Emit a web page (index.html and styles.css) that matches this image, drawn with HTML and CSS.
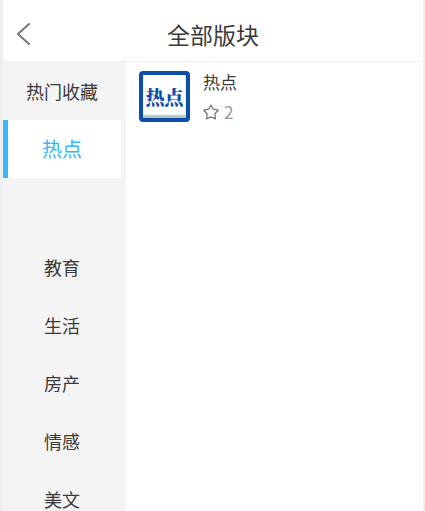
FILE: index.html
```html
<!doctype html>
<html lang="zh-CN">
<head>
  <meta charset="UTF-8" />
  <title>全部版块</title>
  <meta name="viewport" content="width=device-width, initial-scale=1.0" />
  <link rel="stylesheet" href="styles.css">
</head>
<body>
  <div class="app">
    <header class="header">
      <button class="back" type="button" aria-label="返回">
        <svg width="14" height="22" viewBox="0 0 14 22" fill="none" stroke="#777" stroke-width="2" stroke-linecap="round">
          <path d="M13 1 L2 11 L13 21" />
        </svg>
      </button>
      <h1>全部版块</h1>
    </header>
    <div class="content">
      <!-- Category list -->
      <nav class="sidebar">
        <a href="#fav">热门收藏</a>
        <a href="#hot" class="active">热点</a>
        <div class="spacer"></div>
        <a href="#edu">教育</a>
        <a href="#life">生活</a>
        <a href="#house">房产</a>
        <a href="#emotion">情感</a>
        <a href="#essay">美文</a>
      </nav>
      <!-- Boards in the selected category -->
      <main class="boards">
        <a href="#board" class="board">
          <span class="board-logo">热点</span>
          <span class="board-info">
            <span class="board-name">热点</span>
            <span class="board-count">
              <svg width="16" height="16" viewBox="0 0 16 16" fill="none" stroke="#777" stroke-width="1.3" stroke-linejoin="round">
                <path d="M8 1 L10.3 5.2 L15.2 6.2 L11.9 9.8 L12.4 14.8 L8 12.8 L3.6 14.8 L4.1 9.8 L0.8 6.2 L5.7 5.2 Z" />
              </svg>
              2
            </span>
          </span>
        </a>
      </main>
    </div>
  </div>
</body>
</html>
```

FILE: styles.css
```css
* {
  box-sizing: border-box;
}
body, html {
  margin: 0;
  padding: 0;
  height: 100%;
  overflow: hidden;
  font-family: 'Noto Sans CJK SC', sans-serif;
  color: #3a3a3a;
}
a {
  color: inherit;
  text-decoration: none;
}
.app {
  display: flex;
  flex-direction: column;
  height: 100%;
  background: #fff;
  border-left: 3px solid #eee;
  border-right: 2px solid #eee;
}
.header {
  display: grid;
  grid-template-columns: 40px 1fr 40px;
  align-items: center;
  flex-shrink: 0;
  height: 62px;
  padding-top: 6px;
  border-bottom: 1px solid #f0f0f0;
}
.header h1 {
  margin: 0;
  font-size: 23px;
  font-weight: 400;
  line-height: 32px;
  text-align: center;
}
.back {
  display: flex;
  justify-content: center;
  padding: 0;
  border: none;
  background: none;
  cursor: pointer;
}
.content {
  display: flex;
  flex: 1;
  min-height: 0;
}
/* Left category list */
.sidebar {
  width: 123px;
  flex-shrink: 0;
  overflow: hidden;
  background: #f4f4f4;
}
.sidebar a {
  display: block;
  padding-right: 5px;
  font-size: 18px;
  line-height: 58px;
  text-align: center;
}
.sidebar .active {
  margin-right: 5px;
  padding-right: 5px;
  border-left: 5px solid #38b6f8;
  background: #fff;
  color: #38b6f8;
  font-size: 20px;
}
.spacer {
  height: 60px;
}
/* Board cards */
.boards {
  flex: 1;
  padding: 9px 13px;
}
.board {
  display: flex;
  gap: 13px;
}
.board-logo {
  display: flex;
  align-items: center;
  justify-content: center;
  width: 51px;
  height: 51px;
  border: 4px solid #0d4fa8;
  border-radius: 4px;
  background: #fff;
  box-shadow: inset 0 -3px 2px #b4c4c6;
  color: #0d4fa8;
  font-family: 'Noto Serif CJK SC', 'Noto Sans CJK SC', serif;
  font-size: 19px;
  font-weight: 900;
  white-space: nowrap;
}
.board-info {
  display: flex;
  flex-direction: column;
  gap: 8px;
}
.board-name {
  font-size: 17px;
  line-height: 22px;
}
.board-count {
  display: flex;
  align-items: center;
  gap: 5px;
  color: #999;
  font-size: 17px;
  line-height: 22px;
}
```
